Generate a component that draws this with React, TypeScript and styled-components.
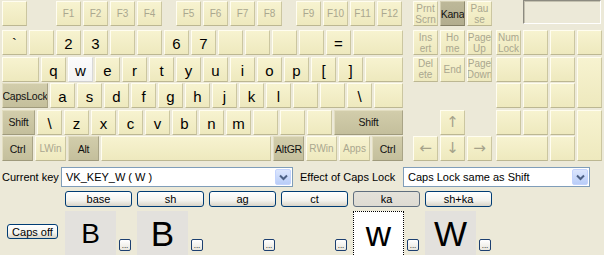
import React from 'react'
import styled, { createGlobalStyle, css } from 'styled-components'

const GlobalStyle = createGlobalStyle`
  html, body {
    margin: 0;
    padding: 0;
    background: #ece9d8;
  }
  body {
    width: 604px;
    height: 255px;
    overflow: hidden;
    font-family: "Liberation Sans", Arial, sans-serif;
  }
`

type Kind = 'plain' | 'mod' | 'dark' | 'sel'
type Tone = 'big' | 'small' | 'dim' | 'arrow'

type KeyDef = {
  l?: React.ReactNode
  w?: number
  grow?: boolean
  kind?: Kind
  t?: Tone
  area?: string
}

const k = (l?: React.ReactNode, t: Tone = 'big'): KeyDef => ({ l, t })
const blank: KeyDef = {}

const fnRow: KeyDef[][] = [
  [k('F1', 'dim'), k('F2', 'dim'), k('F3', 'dim'), k('F4', 'dim')],
  [k('F5', 'dim'), k('F6', 'dim'), k('F7', 'dim'), k('F8', 'dim')],
  [k('F9', 'dim'), k('F10', 'dim'), k('F11', 'dim'), k('F12', 'dim')],
]

const mainRows: KeyDef[][] = [
  [
    k('`'), blank, k('2'), k('3'), blank, blank, k('6'), k('7'),
    blank, blank, blank, blank, k('='), { grow: true },
  ],
  [
    { w: 37 }, k('q'), { l: 'w', t: 'big', kind: 'sel' }, k('e'), k('r'), k('t'), k('y'),
    k('u'), k('i'), k('o'), k('p'), k('['), k(']'), { grow: true },
  ],
  [
    { l: 'CapsLock', t: 'small', kind: 'mod', w: 46 }, k('a'), k('s'), k('d'), k('f'), k('g'),
    k('h'), k('j'), k('k'), k('l'), blank, blank, k('\\'), { grow: true },
  ],
  [
    { l: 'Shift', t: 'small', kind: 'mod', w: 33 }, k('\\'), k('z'), k('x'), k('c'), k('v'),
    k('b'), k('n'), k('m'), blank, blank, blank,
    { l: 'Shift', t: 'small', kind: 'mod', grow: true },
  ],
  [
    { l: 'Ctrl', t: 'small', kind: 'mod', w: 31 },
    { l: 'LWin', t: 'dim', w: 31 },
    { l: 'Alt', t: 'small', kind: 'mod', w: 31 },
    { grow: true },
    { l: 'AltGR', t: 'small', kind: 'mod', w: 31 },
    { l: 'RWin', t: 'dim', w: 31 },
    { l: 'Apps', t: 'dim', w: 31 },
    { l: 'Ctrl', t: 'small', kind: 'mod', w: 31 },
  ],
]

const two = (a: string, b: string) => (
  <>
    {a}
    <br />
    {b}
  </>
)

const navKeys: KeyDef[] = [
  { l: two('Ins', 'ert'), t: 'dim' },
  { l: two('Ho', 'me'), t: 'dim' },
  { l: two('Page', 'Up'), t: 'dim' },
  { l: two('Del', 'ete'), t: 'dim' },
  { l: 'End', t: 'dim' },
  { l: two('Page', 'Down'), t: 'dim' },
  { l: '↑', t: 'arrow', area: '4 / 2' },
  { l: '←', t: 'arrow', area: '5 / 1' },
  { l: '↓', t: 'arrow', area: '5 / 2' },
  { l: '→', t: 'arrow', area: '5 / 3' },
]

const numKeys: KeyDef[] = [
  { l: two('Num', 'Lock'), t: 'dim' }, blank, blank, blank,
  blank, blank, blank, { area: 'span 2 / auto' },
  blank, blank, blank,
  blank, blank, blank, { area: 'span 2 / auto' },
  { area: 'auto / span 2' }, blank,
]

const shiftStates = [
  { name: 'base', ch: 'B', size: 28 },
  { name: 'sh', ch: 'B', size: 35 },
  { name: 'ag' },
  { name: 'ct' },
  { name: 'ka', ch: 'w', size: 35, focus: true },
  { name: 'sh+ka', ch: 'W', size: 35 },
]

const App = () => {
  return (
    <>
      <GlobalStyle />
      <Board>
        <MainBlock>
          <TopRow>
            <Key $w={25} />
            <FnGroups>
              {fnRow.map((group, gi) => (
                <Row key={gi}>
                  {group.map((d, i) => <KeyCap key={i} d={d} />)}
                </Row>
              ))}
            </FnGroups>
          </TopRow>
          <Rows>
            {mainRows.map((row, ri) => (
              <Row key={ri}>
                {row.map((d, i) => <KeyCap key={i} d={d} />)}
              </Row>
            ))}
          </Rows>
        </MainBlock>

        <NavBlock>
          <TopRow>
            <Row>
              <KeyCap d={{ l: two('Prnt', 'Scrn'), t: 'dim' }} />
              <KeyCap d={{ l: 'Kana', t: 'small', kind: 'dark' }} />
              <KeyCap d={{ l: two('Pau', 'se'), t: 'dim' }} />
            </Row>
          </TopRow>
          <NavGrid>
            {navKeys.map((d, i) => <KeyCap key={i} d={d} />)}
          </NavGrid>
        </NavBlock>

        <NumBlock>
          <TopRow>
            <StatusBox />
          </TopRow>
          <NumGrid>
            {numKeys.map((d, i) => <KeyCap key={i} d={d} />)}
          </NumGrid>
        </NumBlock>
      </Board>

      <Controls>
        <TopLine>
          <Label $w={59}>Current key</Label>
          <Combo $w={232}>
            <ComboText>VK_KEY_W ( W )</ComboText>
            <DropButton />
          </Combo>
          <Label $w={103} style={{ marginLeft: 7 }}>Effect of Caps Lock</Label>
          <Combo $w={187}>
            <ComboText>Caps Lock same as Shift</ComboText>
            <DropButton />
          </Combo>
        </TopLine>

        <StateGrid>
          <div />
          {shiftStates.map((s) => (
            <ModeCell key={s.name}>
              <XpButton $on={s.name === 'ka'}>{s.name}</XpButton>
            </ModeCell>
          ))}
          <CapsCell>
            <XpButton $w={51} $h={15}>Caps off</XpButton>
          </CapsCell>
          {shiftStates.map((s) => (
            <CharColumn key={s.name}>
              <CharCell $filled={!!s.ch} $focus={s.focus}>
                {s.ch && <Glyph $size={s.size}>{s.ch}</Glyph>}
              </CharCell>
              <DotsButton>...</DotsButton>
            </CharColumn>
          ))}
        </StateGrid>
      </Controls>
    </>
  )
}

const KeyCap = ({ d }: { d: KeyDef }) => (
  <Key $w={d.w} $grow={d.grow} $kind={d.kind} $area={d.area}>
    {d.l && <KeyLabel $t={d.t ?? 'big'}>{d.l}</KeyLabel>}
  </Key>
)

const DropButton = () => (
  <DropBtn>
    <svg width="9" height="7" viewBox="0 0 9 7">
      <path d="M1 1.5 L4.5 5 L8 1.5" fill="none" stroke="#4d6185" strokeWidth="2" />
    </svg>
  </DropBtn>
)

export default App

const Board = styled.div`
  display: flex;
  padding: 1px 0 0 2px;
`
const MainBlock = styled.div`
  width: 401px;
  display: flex;
  flex-direction: column;
`
const NavBlock = styled.div`
  width: 79px;
  margin-left: 10px;
  display: flex;
  flex-direction: column;
`
const NumBlock = styled.div`
  width: 106px;
  margin-left: 4px;
  display: flex;
  flex-direction: column;
`
const TopRow = styled.div`
  display: flex;
  height: 25px;
  margin-bottom: 4px;
`
const FnGroups = styled.div`
  display: flex;
  gap: 14px;
  margin-left: 29px;
`
const Rows = styled.div`
  display: flex;
  flex-direction: column;
  gap: 1.5px;
`
const Row = styled.div`
  display: flex;
  gap: 2px;
  height: 25px;
`
const NavGrid = styled.div`
  display: grid;
  grid-template-columns: repeat(3, 25px);
  grid-template-rows: repeat(5, 25px);
  gap: 1.5px 2px;
`
const NumGrid = styled.div`
  display: grid;
  grid-template-columns: repeat(4, 25px);
  grid-template-rows: repeat(5, 25px);
  gap: 1.5px 2px;
`
const Key = styled.div<{ $w?: number; $grow?: boolean; $kind?: Kind; $area?: string }>`
  box-sizing: border-box;
  flex: ${(p) => (p.$grow ? '1 1 0' : `0 0 ${p.$w ?? 25}px`)};
  ${(p) => p.$area && css`grid-area: ${p.$area};`}
  display: flex;
  align-items: center;
  justify-content: center;
  overflow: hidden;
  border: 1px solid;
  border-color: #fffdf0 #cbc6a0 #bcb792 #fffdf0;
  background: linear-gradient(#f7f3d0, #eee9be);
  ${(p) =>
    p.$kind === 'mod' &&
    css`
      border-color: #e2ddc0 #a9a486 #9f9a7c #e2ddc0;
      background: linear-gradient(#d2cdab, #c4bf9c);
    `}
  ${(p) =>
    p.$kind === 'dark' &&
    css`
      border-color: #d4cfb2 #8f8a6e #858066 #d4cfb2;
      background: linear-gradient(#bdb899, #b2ad8e);
    `}
  ${(p) =>
    p.$kind === 'sel' &&
    css`
      border-color: #ffffff #d8d8d8 #d0d0d0 #ffffff;
      background: linear-gradient(#fbfbfb, #f3f3f3);
    `}
`
const KeyLabel = styled.span<{ $t: Tone }>`
  white-space: nowrap;
  text-align: center;
  ${(p) =>
    p.$t === 'big' &&
    css`
      font-size: 15px;
      color: #000;
      margin-top: 2px;
    `}
  ${(p) =>
    p.$t === 'small' &&
    css`
      font-size: 10.5px;
      letter-spacing: -0.2px;
      color: #111;
    `}
  ${(p) =>
    p.$t === 'dim' &&
    css`
      font-size: 10px;
      line-height: 11px;
      color: #aaa78f;
    `}
  ${(p) =>
    p.$t === 'arrow' &&
    css`
      font-family: "DejaVu Sans", sans-serif;
      font-size: 15px;
      line-height: 15px;
      color: #a5a28a;
    `}
`
const StatusBox = styled.div`
  box-sizing: border-box;
  width: 78px;
  height: 24px;
  margin: -1px 0 0 27px;
  border: 1px solid;
  border-color: #8c8a80 #ffffff #ffffff #8c8a80;
  box-shadow: inset 1px 1px 0 #c4c1b0;
  background: #ece9d8;
`
const Controls = styled.div`
  padding: 6px 0 0 2px;
`
const TopLine = styled.div`
  display: flex;
  align-items: center;
  height: 20px;
`
const Label = styled.div<{ $w: number }>`
  width: ${(p) => p.$w}px;
  font-size: 11px;
  color: #000;
  white-space: nowrap;
`
const Combo = styled.div<{ $w: number }>`
  box-sizing: border-box;
  width: ${(p) => p.$w}px;
  height: 20px;
  display: flex;
  align-items: center;
  padding: 1px;
  border: 1px solid #7f9db9;
  background: #fff;
`
const ComboText = styled.div`
  flex: 1;
  padding-left: 3px;
  font-size: 11px;
  color: #000;
  white-space: nowrap;
`
const DropBtn = styled.div`
  box-sizing: border-box;
  width: 16px;
  height: 16px;
  display: flex;
  align-items: center;
  justify-content: center;
  border: 1px solid #c3d3fd;
  border-radius: 2px;
  background: linear-gradient(#dce6fd, #b9cdf8);
`
const StateGrid = styled.div`
  display: grid;
  grid-template-columns: 61px repeat(6, 72px);
  grid-template-rows: 16px 52px;
  row-gap: 4px;
  margin-top: 4px;
`
const ModeCell = styled.div`
  padding-left: 2px;
`
const XpButton = styled.button<{ $on?: boolean; $w?: number; $h?: number }>`
  box-sizing: border-box;
  display: flex;
  align-items: center;
  justify-content: center;
  width: ${(p) => p.$w ?? 67}px;
  height: ${(p) => p.$h ?? 16}px;
  padding: 0;
  font-family: "Liberation Sans", Arial, sans-serif;
  font-size: 11px;
  color: #000;
  border: 1px solid #003c74;
  border-radius: 3px;
  background: linear-gradient(#ffffff, #f4f3ee 60%, #d9d4c8);
  ${(p) =>
    p.$on &&
    css`
      border-color: #5f6e7e;
      background: linear-gradient(#e4e2da, #dedbd2);
    `}
`
const CapsCell = styled.div`
  padding: 13px 0 0 5px;
`
const CharColumn = styled.div`
  display: flex;
  align-items: flex-start;
  gap: 3px;
  padding-left: 2px;
`
const CharCell = styled.div<{ $filled: boolean; $focus?: boolean }>`
  box-sizing: border-box;
  width: 51px;
  height: 52px;
  display: flex;
  justify-content: center;
  font-size: 35px;
  line-height: 46px;
  background: ${(p) => (p.$filled ? '#e3e1dd' : 'transparent')};
  ${(p) =>
    p.$focus &&
    css`
      background: #fff;
      border: 1px dotted #000;
      line-height: 44px;
    `}
`
const Glyph = styled.span<{ $size?: number }>`
  font-size: ${(p) => p.$size}px;
  color: #000;
`
const DotsButton = styled.div`
  box-sizing: border-box;
  width: 12px;
  height: 12px;
  margin-top: 28px;
  display: flex;
  align-items: flex-end;
  justify-content: center;
  font-size: 8px;
  line-height: 8px;
  color: #000;
  border: 1px solid #1c3f70;
  border-radius: 2px;
  background: linear-gradient(#ffffff, #e8e6dd);
`
